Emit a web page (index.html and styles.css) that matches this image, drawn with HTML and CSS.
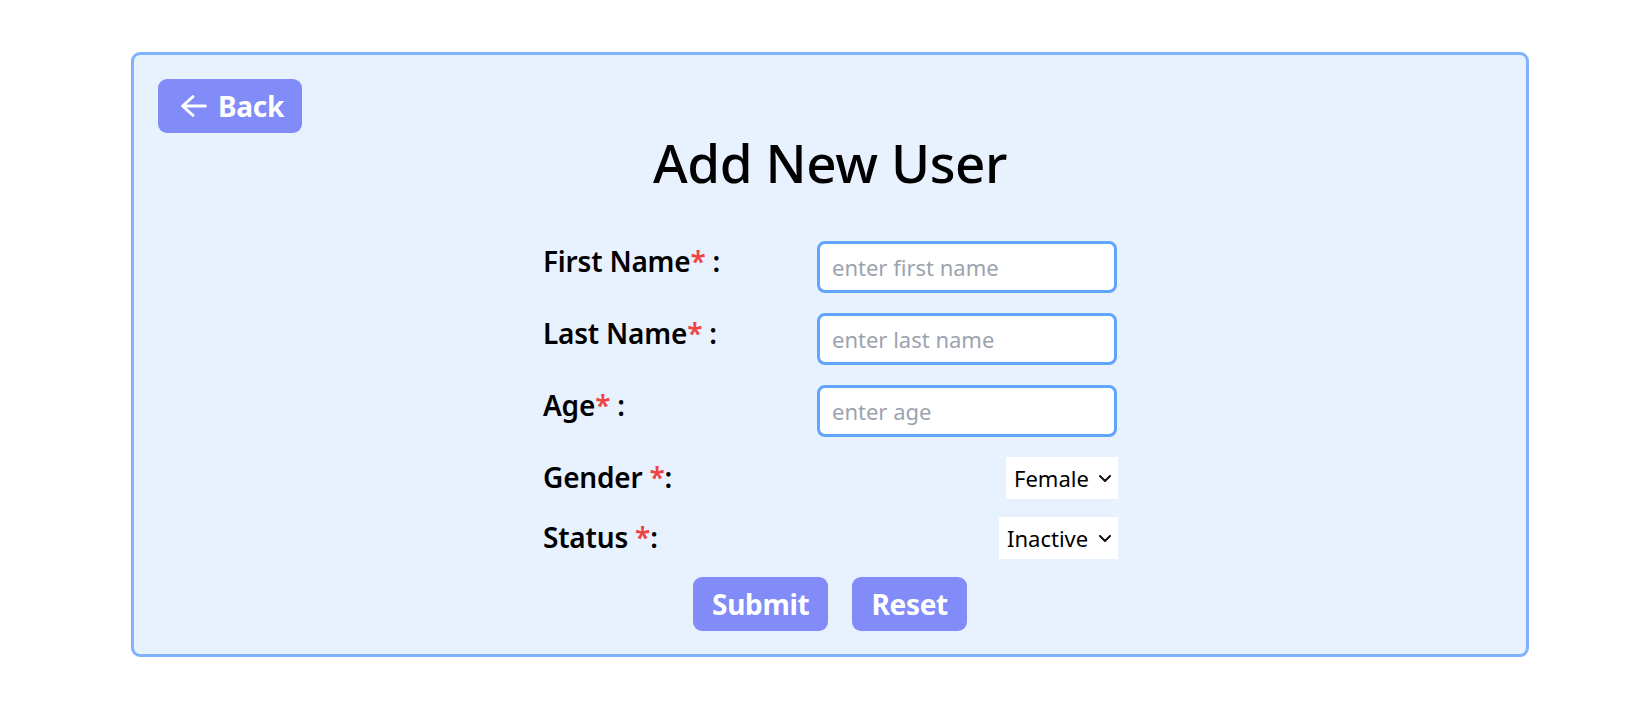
FILE: index.html
```html
<!DOCTYPE html>
<html lang="en">
<head>
<meta charset="utf-8">
<title>Add New User</title>
<link rel="stylesheet" href="styles.css">
</head>
<body>
<div class="page">
  <div class="card">
    <div class="top-bar">
      <button class="btn btn-back" type="button">
        <svg class="back-icon" viewBox="0 0 26 22" width="26" height="22" aria-hidden="true">
          <path d="M12 1.6 L1.6 11 L12 20.4 M1.6 11 H24.4" fill="none" stroke="#fff" stroke-width="2.8" stroke-linecap="round" stroke-linejoin="round"/>
        </svg>
        <span>Back</span>
      </button>
    </div>
    <h1 class="title">Add New User</h1>
    <form class="form">
      <div class="row row-input">
        <label class="label">First Name<span class="req">*</span> :</label>
        <input class="input" type="text" placeholder="enter first name">
      </div>
      <div class="row row-input">
        <label class="label">Last Name<span class="req">*</span> :</label>
        <input class="input" type="text" placeholder="enter last name">
      </div>
      <div class="row row-input">
        <label class="label">Age<span class="req">*</span> :</label>
        <input class="input" type="text" placeholder="enter age">
      </div>
      <div class="row">
        <label class="label">Gender <span class="req">*</span>:</label>
        <div class="select-box">
          <select class="select">
            <option>Male</option>
            <option selected>Female</option>
          </select>
          <svg class="chev" viewBox="0 0 12 7" width="12" height="7" aria-hidden="true">
            <path d="M1 1 L6 6 L11 1" fill="none" stroke="#111" stroke-width="2" stroke-linecap="round" stroke-linejoin="round"/>
          </svg>
        </div>
      </div>
      <div class="row">
        <label class="label">Status <span class="req">*</span>:</label>
        <div class="select-box">
          <select class="select">
            <option>Active</option>
            <option selected>Inactive</option>
          </select>
          <svg class="chev" viewBox="0 0 12 7" width="12" height="7" aria-hidden="true">
            <path d="M1 1 L6 6 L11 1" fill="none" stroke="#111" stroke-width="2" stroke-linecap="round" stroke-linejoin="round"/>
          </svg>
        </div>
      </div>
      <div class="actions">
        <button class="btn" type="submit">Submit</button>
        <button class="btn" type="reset">Reset</button>
      </div>
    </form>
  </div>
</div>
</body>
</html>
```

FILE: styles.css
```css
* { box-sizing: border-box; }

html, body {
  margin: 0;
  background: #ffffff;
}

body {
  font-family: "Noto Sans", "Open Sans", "DejaVu Sans", sans-serif;
  color: #000;
}

.page {
  padding: 52px 113px 0 131px;
}

.card {
  background: #e8f1fe;
  border: 3px solid #80b2fb;
  border-radius: 9px;
  padding: 24px 24px 23px;
}

.top-bar {
  display: flex;
}

.btn {
  display: inline-flex;
  align-items: center;
  height: 54px;
  padding: 0 19px;
  border: 0;
  border-radius: 9px;
  background: #818cf8;
  color: #fff;
  font-family: inherit;
  font-weight: 700;
  font-size: 28px;
  letter-spacing: -0.3px;
  line-height: 40px;
  cursor: pointer;
}

.btn-back {
  padding-left: 23px;
  padding-right: 18px;
  gap: 11px;
}

.back-icon {
  display: block;
  flex: none;
}

.title {
  margin: 0;
  text-align: center;
  font-weight: 500;
  font-size: 53px;
  line-height: 60px;
  letter-spacing: -0.4px;
}

.form {
  width: 574px;
  margin: 48px auto 0;
  display: flex;
  flex-direction: column;
  gap: 18px;
}

.row {
  display: flex;
  justify-content: space-between;
  align-items: flex-start;
}

.row-input {
  padding-bottom: 2px;
}

.label {
  font-size: 28px;
  font-weight: 600;
  line-height: 40px;
  letter-spacing: -0.2px;
}

.req {
  color: #ef4444;
}

.input {
  width: 300px;
  height: 52px;
  margin: 0;
  border: 3px solid #60a5fa;
  border-radius: 8px;
  background: #fff;
  padding: 0 12px;
  font-family: inherit;
  font-size: 22px;
  color: #111;
  outline: none;
}

.input::placeholder {
  color: #9ca3af;
  opacity: 1;
}

.select-box {
  display: flex;
  align-items: center;
  height: 42px;
  margin-right: -1px;
  background: #fff;
  padding: 0 7px 0 8px;
}

.select {
  appearance: none;
  -webkit-appearance: none;
  border: 0;
  margin: 0;
  padding: 0;
  background: transparent;
  font-family: inherit;
  font-size: 22px;
  color: #000;
  line-height: 40px;
  outline: none;
}

.chev {
  display: block;
  flex: none;
  margin-left: 10px;
}

.actions {
  display: flex;
  justify-content: center;
  gap: 24px;
}
```
